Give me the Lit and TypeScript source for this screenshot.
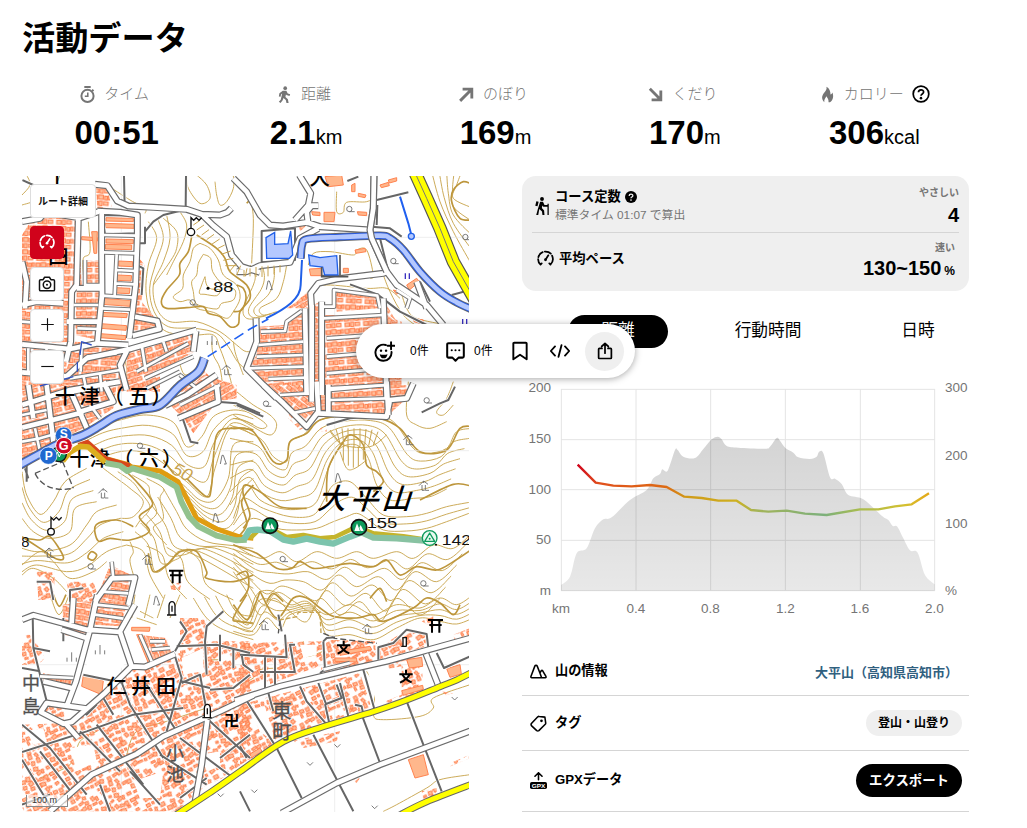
import { html, svg, css, LitElement } from 'lit';
import { customElement, property } from 'lit/decorators.js';

const icons: Record<string, any> = {
  time: svg`<g fill="none" stroke="currentColor"><path stroke-width="2.600" d="M7.500 1.400h9M18.500 5.200l2 2"/><circle cx="12" cy="14" r="8.600" stroke-width="2.800"/><path stroke-width="2.200" d="M12.400 9v5.500H8.200"/></g>`,
  walk: svg`<g fill="currentColor"><circle cx="13" cy="3" r="2.6"/><path d="M9.600 6.600h5l2 4 3.400 1.200-.9 2.400-4.400-1.600-.6-1-.8 4 3.500 3.200 1 5.200h-3l-1-4.200-3.200-2.800-1.400 3.600L6.400 24 4 22.300l2.700-3 2-8.600-1.600 1.200-.6 3.400-2.500-.4.800-4.600z"/></g>`,
  up: svg`<path fill="none" stroke="currentColor" stroke-width="4" d="M3 21L19 5M6.500 4.500H19.500V17.500"/>`,
  down: svg`<path fill="none" stroke="currentColor" stroke-width="4" d="M4 4L19 19M19.500 6.500V19.500H6.500"/>`,
  fire: svg`<path fill="currentColor" d="M10.500 1c1 3.500-1 5.500-3.500 9-3 4.200-4 8 .5 13-.4-3.500.8-5.400 3.300-8.500 1 3 3 4 2.700 8.500h2c4.500-3 5.500-8.500 3.500-14-.8 1.800-1.600 2.600-2.800 3C16.500 7.500 14.500 3 10.500 1z"/>`,
  help: svg`<g fill="none" stroke="currentColor" stroke-width="2.300"><circle cx="12" cy="12" r="10.400"/><path d="M8.600 9.800c0-4.300 6.900-4.400 6.900-.4 0 2.500-3.500 2.500-3.500 4.900"/></g><circle cx="12" cy="17.500" r="1.700" fill="currentColor"/>`,
  helpSolid: svg`<circle cx="12" cy="12" r="12" fill="currentColor"/><path fill="none" stroke="#efefef" stroke-width="2.600" d="M8.300 9.800c0-4.500 7.400-4.500 7.400-.3 0 2.700-3.700 2.500-3.700 5"/><circle cx="12" cy="18" r="1.700" fill="#efefef"/>`,
  hiker: svg`<g fill="currentColor"><circle cx="12" cy="2.600" r="2.600"/><path d="M4.500 5.500l3 .8-1.500 6-3-.8zM9.500 6.200h3.800l2 4.300h4V9h1.700v15h-1.700V13h-5.500l-1.300-1.800-.7 3.600 3 3.200.5 6h-2.700l-.6-4.600-3.600-3.400L7 24H4.300l2-7.500z"/></g>`,
  pace: svg`<g fill="none" stroke="currentColor" stroke-width="2.500" stroke-linecap="round"><path d="M5 20.500Q1.600 17.500 1.600 13M2 10Q3.500 4.500 8 2.900M11 2.200Q16.500 1.800 19.500 5.200M21.300 8Q24.500 15.500 19 20.500M5 20.500l1.600-1.500M19 20.500l-1.600-1.500M12.500 13l3.500-5.500"/></g><circle cx="12" cy="13.800" r="2" fill="currentColor"/>`,
  camera: svg`<g fill="none" stroke="currentColor" stroke-width="2" stroke-linejoin="round"><path d="M3.500 6.200h3.300L8.800 3h6.400l2 3.200h3.300q1.500 0 1.500 1.500v11.800q0 1.500-1.500 1.500h-17Q2 21 2 19.500V7.700q0-1.500 1.500-1.500z"/><circle cx="12" cy="13" r="5"/></g><circle cx="12" cy="13" r="1.300" fill="currentColor"/>`,
  plus: svg`<path stroke="currentColor" stroke-width="1.800" d="M2 12h20M12 2v20"/>`,
  minus: svg`<path stroke="currentColor" stroke-width="1.800" d="M2 12h20"/>`,
  smile: svg`<g fill="none" stroke="currentColor" stroke-width="2.200" stroke-linecap="round"><path d="M13.500 4.600A9.200 9.200 0 1 0 20 12.500M19.500 1.500v8M15.500 5.500h8"/></g><circle cx="8" cy="11" r="1.400" fill="currentColor"/><circle cx="13.800" cy="11" r="1.400" fill="currentColor"/><path fill="currentColor" d="M6.500 15q4.500 1.500 9 0-1 4.800-4.500 4.800T6.500 15z"/>`,
  comment: svg`<path fill="none" stroke="currentColor" stroke-width="2.300" stroke-linejoin="round" d="M4 2.500h16q1.500 0 1.500 1.500v13.500q0 1.500-1.500 1.500h-4.500L12 22.500 8.500 19H4q-1.500 0-1.500-1.500V4q0-1.500 1.500-1.500z"/><g fill="currentColor"><circle cx="7.700" cy="10.500" r="1.200"/><circle cx="12" cy="10.500" r="1.200"/><circle cx="16.300" cy="10.500" r="1.200"/></g>`,
  bookmark: svg`<path fill="none" stroke="currentColor" stroke-width="2.300" stroke-linejoin="round" d="M5 2h14q1 0 1 1v19l-8-5.500L4 22V3q0-1 1-1z"/>`,
  code: svg`<path fill="none" stroke="currentColor" stroke-width="2.200" stroke-linecap="round" stroke-linejoin="round" d="M6 6.500l-5 5.500 5 5.500M18 6.500l5 5.500-5 5.500M13.800 5l-3.600 14"/>`,
  share: svg`<path fill="none" stroke="currentColor" stroke-width="2.300" stroke-linecap="round" stroke-linejoin="round" d="M8 8.500H4.500q-1 0-1 1V21q0 1 1 1h15q1 0 1-1V9.500q0-1-1-1H16M12 15V2M7.500 6L12 1.800 16.500 6"/>`,
  mountain: svg`<path fill="none" stroke="currentColor" stroke-width="2.200" stroke-linejoin="round" d="M8.500 3.200q-1.200 0-1.700 1.200L1.300 19q-.4 1.700 1.200 1.700h19q1.700-.2 1-1.700l-4.600-8q-1-1.400-2 0L14 14 10.200 4.400q-.5-1.200-1.700-1.200zM14 14l2.400 6.700"/>`,
  tag: svg`<path fill="none" stroke="currentColor" stroke-width="2.200" stroke-linejoin="round" d="M13 2l8 1 1.200 8.500q0 1-1 2L12.500 22q-1.500 1-3 0L2 15q-1-1.500 0-3l9-9.500q1-.7 2-.5z"/><circle cx="16.200" cy="8.200" r="1.900" fill="currentColor"/>`,
  gpx: svg`<path fill="none" stroke="currentColor" stroke-width="2.200" stroke-linecap="round" stroke-linejoin="round" d="M12 11V1.500M7 6l5-5 5 5"/><rect x="0" y="14" width="24" height="10" rx="2.500" fill="currentColor"/><text x="12" y="22" font-size="8.500" font-weight="700" text-anchor="middle" textLength="19" lengthAdjust="spacingAndGlyphs" fill="#fff" font-family="Liberation Sans, sans-serif">GPX</text>`,
};

const icon = (name: string, size: number, cls = '') => html`
  <svg class="icon ${cls}" width=${size} height=${size} viewBox="0 0 24 24">${icons[name]}</svg>
`;

type Pt = number[];
const parse = (s: string): Pt[] => s.trim().split(/\s+/).map(p => p.split(',').map(Number));
const r1 = (n: number) => Math.round(n * 10) / 10;

// smooth curve through all points
const curve = (p: Pt[]) => {
  let d = `M${p[0]}`;
  for (let i = 0; i < p.length - 1; i++) {
    const a = p[i - 1] || p[i];
    const b = p[i];
    const c = p[i + 1];
    const e = p[i + 2] || c;
    d += `C${r1(b[0] + (c[0] - a[0]) / 6)},${r1(b[1] + (c[1] - a[1]) / 6)} ${r1(c[0] - (e[0] - b[0]) / 6)},${r1(c[1] - (e[1] - b[1]) / 6)} ${c}`;
  }
  return d;
};
const line = (s: string) => 'M' + s.trim().replace(/ /g, 'L');

// map sheets, 3 units per pixel
interface Sheet {
  x: number;
  y: number;
  // pairs of boundary contours and how many steps lie between them
  bands?: [string, string, number][];
  bold?: string[];
  thin?: string[];
  estate?: [string, number][];
  village?: string[];
  blocks?: string[];
  blank?: string[];
  wide?: string[];
  narrow?: string[];
  gray?: string[];
}

const sheets: Sheet[] = [
  {
    x: 0, y: 0,
    bands: [
      ['385,140 410,190 385,270 378,350 395,420 440,470 520,480 580,480 600,520 625,590 640,650', '440,120 450,190 430,260 400,330 410,400 450,440 530,440 600,470 650,510 680,530 720,520', 2],
      ['500,0 505,40 540,85 570,70 560,30 530,0', '640,0 640,40 620,80 600,90 590,60 585,20 600,0', 1],
      ['575,500 580,540 600,580 610,650', '640,500 645,530 655,560 670,600 700,610', 1],
    ],
    bold: [
      '515,185 505,230 480,265 478,300 440,345 424,380 440,400 500,398 550,395 565,415 600,425 630,455 655,448 660,410 690,370 680,330 630,290 615,250 590,220 530,180',
    ],
    thin: [
      '555,305 560,330 575,342 600,345 590,362 555,358 538,355 545,330 555,305',
      '550,238 572,250 578,290 610,330 645,345 640,375 605,385 590,402 540,392 525,380 520,350 515,320 530,300 535,265 550,238',
      '540,205 520,220 510,260 490,300 488,340 460,365 480,380 510,375 530,400 580,412 620,430 640,410 660,370 650,330 610,300 595,255 570,220 540,205',
      '205,140 210,230 190,250 190,300', '6,90 50,75 100,40 120,0', '260,30 330,75 375,100 375,115',
      '480,110 500,150 490,200 460,260 440,300', '430,130 470,170 470,220 450,260 400,330',
      '6,60 30,30 20,0', '480,570 500,600 560,560', '300,525 320,580 310,640',
    ],
    estate: [
      ['50,110 165,125 165,320 150,500 6,510 6,180', 2],
      ['228,35 262,40 275,95 232,100', 5],
      ['195,255 240,255 235,495 165,480 170,340 195,330', 0],
      ['353,245 375,270 365,380 415,440 415,470 340,490', 4],
      ['6,520 160,530 150,640 6,640', 8], ['165,500 315,510 310,650 120,650', 4],
      ['320,530 520,475 522,530 420,590 420,650 320,650', -18],
      ['450,650 545,580 570,605 540,650', -40],
      ['175,130 185,330 170,330 165,130', 0],
    ],
    blocks: [
      '258,128 340,130 340,140 258,138', '256,145 342,148 342,160 256,158', '258,192 340,194 340,206 258,204',
      '256,208 335,210 335,224 256,222', '296,258 338,260 338,275 296,273', '292,300 335,302 333,318 292,316',
      '288,338 330,340 328,356 288,354', '246,370 332,376 330,394 246,388', '244,412 322,416 320,428 244,424',
      '243,446 320,452 318,466 243,460', '241,476 318,482 316,494 241,488', '185,185 232,188 232,198 185,194',
      '215,170 232,170 230,235 222,235',
    ],
    wide: [
      '225,28 262,32 292,78 325,93 400,97 500,103 545,118 580,152 620,185 635,240 665,275 720,292',
      '545,118 600,120 622,112 634,100', '232,108 300,112 352,120 352,180 347,330 328,490',
      '245,112 245,230 246,360 232,505', '50,108 175,128 170,330 155,350 152,500 138,560', '6,140 60,130 80,105',
      '6,508 150,522 232,505 325,510', '345,425 412,438 418,462 338,482', '170,340 240,340',
      '6,592 140,604 200,550 330,522 530,465', '322,525 300,570 320,645', '528,468 520,530', '6,260 20,320 15,400',
      '140,440 235,440', '6,390 50,380 130,385', '175,130 235,110',
    ],
    narrow: [
      '250,180 350,182', '250,232 350,235', '290,238 284,362', '290,285 345,288', '288,325 345,328', '245,362 340,368',
      '243,400 330,404', '172,460 235,462', '195,255 195,330 240,330', '160,390 235,390', '365,510 378,590',
      '350,590 505,505', '375,610 520,545', '430,500 440,530', '185,505 182,590', '200,545 290,535', '150,610 300,585',
      '240,595 245,650', '190,600 200,650', '380,640 480,590', '480,600 530,640', '80,520 70,600', '25,520 25,600', '6,440 130,450',
    ],
    gray: [
      '375,170 400,140 430,120 490,105', '375,155 375,205 352,205', '312,3 314,95', '498,0 497,95', '250,362 335,370 340,380',
      '350,270 370,280 365,360', '6,15 40,30 40,70', '245,120 350,122 350,175 255,178z',
    ],
  },
  {
    x: 660, y: 0,
    bands: [
      ['575,-10 600,80 640,170 690,260', '665,-10 650,30 640,70 700,100', 4],
      ['30,270 45,300 40,330 10,400 20,430 60,430', '140,270 130,320 110,370 60,400 70,420 110,410', 3],
      ['480,340 500,400 530,430 620,450', '430,300 450,350 490,420 540,460', 1],
    ],
    bold: ['700,30 670,20 640,45 635,80 660,130 700,135', '-10,330 10,340 18,370 5,405 -20,410', '10,50 30,70 20,85'],
    thin: ['30,70 40,130 35,265', '290,50 290,110 310,112 320,82 380,80 400,60 400,0', '205,270 220,235 270,230 340,240 350,225 380,225 400,300 390,310', '175,390 210,345 260,330 380,340 440,340 480,370', '195,500 300,495 350,490'],
    estate: [
      ['55,455 135,450 190,410 200,400 240,380 240,420 430,420 485,440 485,650 110,650 20,580 50,540', -4],
      ['282,345 412,360 415,400 290,410', 3], ['425,365 470,440 430,440', 40],
      ['165,150 200,150 180,170', -20], ['140,400 170,380 190,360 210,345 210,400', -30],
    ],
    blocks: ['208,282 245,280 245,302 212,302', '252,112 285,112 282,140 252,140', '255,5 305,0 310,30 265,35', '310,280 325,280 325,293 310,293', '345,225 375,220 378,230 348,235', '500,330 530,310 538,320 508,345', '420,30 445,22 448,32 424,38', '355,55 378,60 375,68 355,64', '460,345 478,350 470,358', '335,30 345,25 345,50 335,50', '445,15 470,8 470,18 448,24', '215,110 240,112 240,122 218,120', '352,110 380,112 380,122 355,120', '520,430 550,435 550,448 522,440'],
    wide: [
      '-20,10 20,50 60,120 90,150 130,153 200,142 240,155 390,165', '178,0 212,55 205,90 165,135', '205,150 200,110 215,92 235,92',
      '402,0 400,100 390,165 395,190 440,290 470,330 560,390 610,450', '-10,290 20,290 60,272 150,262 180,190 235,160',
      '215,400 212,355 235,325 290,312 430,295 442,290', '530,320 560,400', '48,430 50,500 20,580 110,670', '215,390 215,680',
      '245,380 245,660', '430,370 440,670', '195,400 200,660',
    ],
    narrow: [
      '250,430 430,420', '260,490 430,478', '55,510 190,500', '25,580 195,575', '50,545 190,540', '260,545 440,530', '260,595 440,580',
      '85,612 200,608', '260,640 440,630', '62,470 135,468 140,440 185,408', '245,395 282,395 282,345 412,362 420,400',
      '470,345 510,370 500,400',
    ],
    gray: [
      '65,168 165,160 165,255 65,262z', '395,155 450,160 485,185', '410,75 505,52', '322,18 355,5', '412,90 410,150', '690,345 635,360', '470,210 500,235',
      '540,320 570,380', '330,328 412,358 480,410 560,450', '245,302 340,303', '420,190 445,290',
    ],
  },
  {
    x: 0, y: 630,
    bands: [
      ['150,168 230,125 300,105 380,90 460,112 500,185 545,155 580,95 640,75 700,85', '250,215 300,200 350,198 400,215 450,250 500,290 560,335 585,250 630,130 700,150', 4],
      ['440,262 490,300 540,345 585,345 625,280 640,180 700,170', '480,320 520,370 570,415 620,430 650,390 665,320 700,280', 4],
      ['430,310 470,380 500,432 560,470 640,482 700,490', '345,440 385,480 405,560 450,535 500,500 700,610', 5],
      ['250,250 290,280 330,310 370,350 340,395 300,400', '380,280 430,310 420,340 430,400 400,430 440,480', 3],
      ['6,260 20,330 60,388 100,350 135,290 200,250', '6,400 40,440 90,460 150,440 165,370 230,350', 3],
      ['6,490 60,500 150,480 200,420 230,380 290,360', '6,560 50,540 140,560 200,545 260,500 320,480', 3],
      ['320,480 370,500 390,570 430,640', '500,490 540,530 560,600 640,645', 3],
    ],
    bold: [
      '300,245 345,285 398,355 358,395 388,438 330,465 270,460 235,468 228,420 290,405 340,425', '6,458 60,465 90,455 130,515 110,522 60,490 6,455',
      '385,505 400,560 440,540 480,500 530,500 560,560 560,580 640,590 700,570', '205,510 215,500 230,510 220,525 205,520 205,510',
      '500,280 560,335 575,300 590,150 650,130 700,135', '640,470 680,420 665,350 700,300', '430,225 460,265',
    ],
    thin: ['6,540 60,500 100,530 150,580 220,560 260,530', '6,570 40,550 100,580 140,620', '330,470 340,500 330,530 350,600'],
    estate: [['6,0 290,0 280,70 190,130 6,220', -14], ['450,60 550,-30 650,0 650,40 590,50 520,145 490,100', -30], ['270,540 345,575 325,650 225,650', 12]],
    village: ['50,560 105,560 100,645 55,645', '140,590 220,590 240,650 150,650', '450,600 485,590 480,615 455,615'],
    wide: [
      '6,60 150,15 300,-10', '6,128 190,82', '80,0 100,170', '150,15 170,60 205,140', '435,62 500,30 590,-30', '475,100 595,50 590,0',
      '25,0 40,100', '225,650 275,580 345,578 325,660', '180,80 280,50 250,-10',
    ],
    narrow: ['6,170 60,160 130,140', '45,130 60,200', '6,90 80,75', '210,60 240,100', '480,60 600,0', '275,530 280,580', '245,620 325,625', '110,30 230,10'],
    gray: ['488,100 505,150 512,170 535,175', '15,250 25,280', '50,590 90,590 100,645', '150,650 150,615 190,610', '590,50 650,55 720,85', '20,235 20,290'],
  },
  {
    x: 660, y: 630,
    bands: [
      ['-30,120 60,160 100,215 140,230 150,170 190,150 240,105 320,92 400,92 460,110 520,190 560,205 620,190 650,140 700,130', '-30,360 20,300 60,345 120,370 180,372 230,350 265,250 300,190 350,180 385,220 410,300 450,345 520,340 570,335 620,312 700,305', 6],
      ['-20,400 10,340 70,370 150,395 220,390 255,340 280,300 330,290 380,340 430,390 500,395 560,385 620,365 700,350', '-20,440 40,400 110,430 170,435 230,430 280,410 320,395 350,385 380,400 430,435 500,438 560,430 620,410 700,380', 2],
      ['-20,478 60,520 120,500 170,530 230,500 290,520 350,500 400,520 470,500 520,520 580,480 640,490 700,440', '-20,560 20,620 60,690 100,640 150,680 200,710 240,640 300,690 360,650 420,710 470,640 540,690 600,640 640,670 700,620', 6],
      ['505,-10 500,90 530,120 570,130 620,110', '640,-10 620,40 590,80 610,90 640,60', 1],
      ['-10,20 40,60 90,90 110,120 90,150 30,120 -20,90', '-20,60 30,85 70,110 80,125 60,130 20,110 -20,100', 1],
    ],
    bold: [
      '-20,130 40,140 100,230 140,225 150,170 200,145 240,105 330,92 420,100 480,130 540,200 620,195 660,130 700,125',
      '260,350 265,250 310,170 335,150 370,180 380,240 410,260 430,290 400,320', '-20,480 50,505 110,550 155,550 180,530 220,550 270,545 330,535 400,545 440,525 480,570 530,545 590,555 640,530 700,490',
      '10,430 30,390 10,330 15,300 60,320 120,365 200,370', '540,345 640,298 700,305', '-10,570 20,560 25,610 0,650', '80,650 100,625 130,650', '390,640 420,610 440,650',
    ],
    thin: ['270,140 310,180 390,185 440,150', '300,200 320,250 345,250 380,225'],
    estate: [['90,0 225,0 230,80 200,125 130,60', 38], ['240,0 520,0 500,40 440,95 240,85', -3]],
    village: ['0,35 12,35 12,45 0,45', '240,130 260,125 260,140 245,140', '145,80 190,130 180,135 145,100'],
    wide: ['70,0 130,55 200,125 235,80 230,-10', '235,85 440,95 450,45 500,40 520,-5', '265,0 265,80', '440,-10 445,90'],
    narrow: ['270,45 440,40', '270,15 440,0', '155,85 225,70', '120,30 205,25'],
    gray: ['-10,60 70,95', '240,85 400,92', '260,120 330,100 430,92', '545,82 600,55 625,45 645,5'],
  },
  {
    x: 0, y: 1269,
    bands: [
      ['520,0 560,60 610,95 700,125', '620,-10 640,30 665,50 700,55', 3],
      ['345,-10 335,60', '480,-10 450,60', 3], ['350,60 410,80', '360,40 400,60', 1],
    ],
    bold: ['100,-10 118,25 138,-10', '680,-10 640,60 655,70 700,75'],
    thin: ['90,-10 117,50 148,-10', '60,540 150,500 180,430 230,400', '320,470 350,400 440,370 560,330', '470,215 520,190 600,185'],
    estate: [['228,10 325,10 300,85 225,80', 8], ['128,20 215,10 195,120 130,110', 10], ['355,110 440,120 455,165 385,195', 70], ['70,225 155,245 150,270 70,250', 8]],
    blocks: ['335,88 390,88 388,100 335,98', '190,232 250,248 245,290 185,265', '350,110 365,110 395,190 385,195'],
    village: ['6,110 35,110 75,180 55,200 6,200', '480,60 560,60 560,130 690,130 690,480 470,640 6,640 6,380 140,375 270,280 330,210 480,165', '80,310 140,330 130,370 70,345'],
    blank: ['150,450 220,440 230,490 170,520', '340,550 430,520 420,600 360,600', '540,470 600,460 600,500 560,520', '200,110 300,120 320,190 260,270 200,225', '485,180 550,150 550,220 490,230', '20,400 70,390 80,430 40,440', '560,560 690,510 690,640 470,640'],
    wide: [
      '6,65 40,52 200,95 300,102 335,205 375,207 465,168', '232,-10 210,95 168,250 140,325', '335,205 255,285 155,372 130,377 62,342 80,315 200,332',
      '700,292 600,340 430,415 350,468 215,530 90,640', '562,365 545,500 525,612', '135,375 175,420', '70,250 155,270', '345,20 300,100', '160,0 155,75', '125,95 200,120',
    ],
    narrow: ['225,50 310,62', '228,20 325,30', '360,110 395,190', '390,130 435,130', '395,155 450,150', '60,235 160,240'],
    gray: [
      '6,462 200,400 340,350 490,330', '6,380 90,450 200,590', '38,50 40,150 80,310', '60,460 160,590', '300,240 330,320 430,480', '380,260 470,400', '462,165 485,240 460,330 440,400',
      '230,380 370,560', '180,400 300,520', '420,470 560,560', '480,420 640,540', '570,370 690,480', '485,255 540,230 560,340', '470,145 590,140 690,165', '600,110 600,190', '560,230 555,130 560,85 610,40',
      '480,70 500,100 465,160', '570,275 640,270 690,230', '6,485 100,640', '240,560 270,640', '330,520 420,620', '130,60 130,130', '40,150 90,160', '6,210 60,220', '190,230 310,255', '485,250 570,270',
      '640,150 640,210', '600,480 690,410', '150,320 200,350 230,320', '6,620 90,590', '480,600 560,540', '250,300 280,350',
    ],
  },
  {
    x: 660, y: 1269,
    bands: [
      ['-20,30 20,70 50,-10 100,-20 150,20 200,10 260,50 330,20 400,50 470,20 540,30 600,0 650,20 700,-10', '-20,100 40,110 80,60 120,95 150,50 230,40 260,110 330,110 400,125 470,90 540,60 600,70 650,78 700,60', 4],
    ],
    bold: ['-20,20 20,65 45,20 60,-20', '60,-20 110,60 160,0 200,0 240,30 280,55 350,60 400,50 430,70 520,30 560,0 600,15 640,50 660,20'],
    thin: ['0,260 40,240 60,215 130,210', '380,220 405,270 400,350 430,365 540,355 580,330 580,300 690,260', '430,640 470,620 560,570 600,545 690,530', '190,130 195,175 250,160'],
    village: [
      '0,135 250,130 250,200 0,290', '260,125 405,130 410,195 240,230', '0,320 360,225 395,330 230,380 130,420 90,450 0,500', '440,180 545,180 550,290 440,320',
      '415,150 500,95 560,110 560,145 420,185', '640,110 690,90 690,125 645,130', '545,70 580,55 580,90', '150,430 300,400 290,430 190,450', '545,580 590,570 590,600 550,605', '330,540 360,540 350,555', '600,280 640,285 610,295', '620,500 690,470 690,480 620,510',
    ],
    blank: ['385,225 485,205 485,290 410,320', '55,250 90,250 90,270 60,270', '30,340 75,325 110,440 60,400', '180,140 230,140 230,170 190,180'],
    blocks: ['505,485 550,470 565,530 525,540', '500,185 545,178 548,205 508,210', '620,212 660,200 664,228 630,238', '30,468 60,450 66,460 34,480', '300,160 390,145 395,155 300,172', '285,180 350,180 350,192 285,190', '485,278 548,262 550,274 490,292'],
    wide: ['-15,308 120,265 350,210 440,190 700,118', '558,168 595,262', '125,645 290,555 420,500 720,388'],
    narrow: ['250,215 330,195'],
    gray: [
      '110,450 185,600', '220,410 340,640', '365,350 420,495', '500,310 550,440 605,580', '590,165 612,210 690,175', '370,215 405,340', '0,170 140,178 135,110', '75,175 75,270', '105,178 105,260', '165,225 150,140 165,140',
      '60,222 165,222', '250,130 255,215 240,225', '180,265 200,310 265,385', '235,255 258,318 305,300 290,260', '20,308 110,450', '300,255 325,355', '415,185 415,148 460,135 500,95 560,108 565,150', '85,285 100,340', '0,445 20,480',
      '0,580 30,640', '250,130 260,120 285,118', '5,170 10,200 40,222', '255,318 270,385', '345,320 365,325 370,350', '115,50 125,100',
    ],
  },
];

const band = ([a, b, n]: [string, string, number]) => {
  const pa = parse(a);
  const pb = parse(b);
  const len = Math.min(pa.length, pb.length);
  return Array.from({ length: n + 1 }, (_, i) => {
    const t = i / n;
    return curve(pa.slice(0, len).map((p, k) => [r1(p[0] + (pb[k][0] - p[0]) * t), r1(p[1] + (pb[k][1] - p[1]) * t)]));
  });
};

// scattered village houses for the repeating fill
let seed = 11;
const rand = () => (seed = (seed * 16807) % 2147483647) / 2147483647;
const houses = Array.from({ length: 100 }, (_, i) => ({
  x: (i % 10) * 18 + rand() * 6,
  y: Math.floor(i / 10) * 18 + rand() * 6,
  w: 6 + rand() * 9,
  h: 5 + rand() * 8,
  r: rand() * 40 - 20,
  on: rand() > 0.17,
}));

const angles = [...new Set(sheets.flatMap(s => (s.estate || []).map(e => e[1])))];

const river = '553,550 535,590 480,632 420,690 360,703 290,722 240,752 190,780 110,810 -10,875';
const canal = '842,250 846,210 862,192 960,186 1080,182 1110,190 1150,225 1200,290 1260,350 1310,382 1360,405';

// [colour, width, points]
const route: [string, number, string][] = [
  ['#e09c10', 15, '255,850 322,868 335,876 420,888 474,920 496,962 530,1030 590,1062 660,1086 700,1090'],
  ['#d8481c', 13, '175,810 202,801 224,820 256,850 330,872'],
  ['#dcae1e', 17, '128,858 148,833 180,814 205,816 256,862'],
  ['#c4b42c', 14, '690,1090 715,1065 750,1060 800,1086 850,1080 900,1090 945,1086 1010,1055 1060,1075 1150,1084 1230,1096'],
  ['#92c28e', 18, '256,864 300,872 322,888 338,880 420,906 470,936 484,980 508,1026 535,1054 590,1082 650,1096 680,1094'],
  ['#7cc4ad', 19, '672,1094 688,1066 712,1064 750,1068 790,1094 820,1100 860,1091 900,1100 940,1106 990,1085 1025,1072'],
  ['#88c2a2', 19, '1025,1072 1060,1088 1130,1090 1230,1098'],
];

const trees: [number, number][] = [[620, 585], [250, 955], [88, 1133], [382, 1154], [1165, 795], [1212, 932], [1042, 1362], [732, 1350]];
const conifers: [number, number][] = [[748, 332], [610, 855], [588, 1030], [955, 910], [410, 1278]];
const circles: [number, number][] = [[518, 382], [988, 102], [1120, 258], [1336, 186], [360, 812], [738, 686], [1220, 676], [788, 1152], [1210, 1225], [212, 1174]];
const grass: [number, number][] = [[155, 1450], [240, 1428], [576, 500]];
const ticks: [number, number][] = [[952, 1712], [870, 1766], [703, 1848], [1064, 1896], [1304, 1570], [602, 1860]];
const schools: [number, number][] = [[971, 1417], [1158, 1504]];

@customElement('trail-map')
export class TrailMap extends LitElement {
  static styles = css`
    :host {
      display: block;
      position: relative;
      height: 636px;
      border-radius: 6px;
      overflow: hidden;
      background: #fff;
    }
    .map {
      display: block;
      width: 100%;
      height: 100%;
    }
    .label {
      font-family: 'Noto Sans CJK JP', sans-serif;
      font-weight: 500;
      fill: #000;
    }
    .area {
      font-family: 'Noto Sans CJK JP', sans-serif;
      fill: #505050;
      stroke: #505050;
      stroke-width: 1px;
    }
    .mark {
      font-family: 'Noto Sans CJK JP', sans-serif;
      font-weight: 700;
    }
    .number {
      font-family: 'Liberation Sans', sans-serif;
      fill: #111;
    }
    .number.height {
      fill: #c8a450;
      font-style: italic;
    }
    .badge {
      font-family: 'Liberation Sans', sans-serif;
      font-weight: 700;
      fill: #fff;
      text-anchor: middle;
    }
    .controls {
      position: absolute;
      left: 8px;
      top: 8px;
      display: flex;
      flex-direction: column;
      align-items: flex-start;
      gap: 8px;
    }
    .button {
      width: 34px;
      height: 33.500px;
      display: flex;
      align-items: center;
      justify-content: center;
      box-sizing: border-box;
      background: #fff;
      color: #111;
      border: 1px solid #ddd;
      border-radius: 4px;
    }
    .button.wide {
      width: 66px;
      padding-bottom: 1px;
      font: 700 10px 'Noto Sans CJK JP', sans-serif;
    }
    .button.active {
      background: #d0021b;
      border-color: #d0021b;
      color: #fff;
    }
    .button.zoom {
      padding-bottom: 2px;
    }
    .scale {
      position: absolute;
      left: 4px;
      bottom: 5px;
      width: 42px;
      height: 12px;
      box-sizing: border-box;
      padding-left: 5px;
      border: 1px solid #888;
      border-top: 0;
      background: rgba(255, 255, 255, 0.6);
      color: #333;
      font: 9px/10px 'Liberation Sans', sans-serif;
    }
  `;

  layer(pick: (s: Sheet) => any) {
    return sheets.map(s => svg`<g transform="translate(${s.x} ${s.y})">${pick(s)}</g>`);
  }

  strokes(lines: string[] | undefined, color: string, width: number) {
    return svg`<path d=${(lines || []).map(line).join('')} fill="none" stroke=${color} stroke-width=${width} stroke-linejoin="round" />`;
  }

  terrain() {
    return this.layer(s => svg`
      <path d=${(s.bands || []).flatMap(band).join('')} fill="none" stroke="#c8a54e" stroke-width="2.800" />
      <path d=${(s.thin || []).map(t => curve(parse(t))).join('')} fill="none" stroke="#c8a54e" stroke-width="2.800" />
      <path d=${(s.bold || []).map(t => curve(parse(t))).join('')} fill="none" stroke="#bd963c" stroke-width="5" />
    `);
  }

  buildings() {
    return this.layer(s => svg`
      ${(s.estate || []).map(([p, a]) => svg`<polygon points=${p} fill="#fff" /><polygon points=${p} fill="url(#estate${a})" />`)}
      ${(s.village || []).map(p => svg`<polygon points=${p} fill="url(#village)" />`)}
      ${(s.blank || []).map(p => svg`<polygon points=${p} fill="#fff" />`)}
      ${(s.blocks || []).map(p => svg`<polygon points=${p} fill="#ffb78c" stroke="#ff8350" stroke-width="3" />`)}
    `);
  }

  roads() {
    return svg`
      ${this.layer(s => this.strokes(s.gray, '#fff', 11))}
      ${this.layer(s => this.strokes(s.gray, '#666', 6))}
      ${this.layer(s => svg`${this.strokes(s.wide, '#6c6c6c', 21)}${this.strokes(s.narrow, '#777', 14)}`)}
      ${this.layer(s => svg`${this.strokes(s.wide, '#fff', 14)}${this.strokes(s.narrow, '#fff', 8)}`)}
    `;
  }

  highways() {
    const main = line('1186,-5 1220,70 1260,160 1300,260 1365,375');
    const south = [
      '460,1925 580,1846 660,1790 790,1700 910,1655 1060,1610 1160,1575 1260,1535 1310,1515 1370,1485',
      '1130,1925 1220,1880 1370,1822',
    ].map(l => curve(parse(l))).join('');
    return svg`
      <path d=${main} fill="none" stroke="#555" stroke-width="40" />
      <path d=${main} fill="none" stroke="#ff0" stroke-width="33" />
      <path d=${main} fill="none" stroke="#777" stroke-width="3" />
      <path d=${south} fill="none" stroke="#666" stroke-width="21" />
      <path d=${south} fill="none" stroke="#ff0" stroke-width="15" />
    `;
  }

  water() {
    return svg`
      <g fill="none" stroke-linejoin="round">
        <path d=${curve(parse(river))} stroke="#666" stroke-width="29" />
        <path d=${curve(parse(river))} stroke="#3a66d8" stroke-width="23" />
        <path d=${curve(parse(river))} stroke="#b4c8ff" stroke-width="17" />
        <path d=${curve(parse(canal))} stroke="#666" stroke-width="25" />
        <path d=${curve(parse(canal))} stroke="#2a5ce0" stroke-width="20" />
        <path d=${curve(parse(canal))} stroke="#b4c8ff" stroke-width="14" />
        <path d="M563,545L690,462L745,432" stroke="#2060f0" stroke-width="5" stroke-dasharray="32 16" />
        <path d="M738,430C800,400 842,370 842,330L846,255" stroke="#2060e8" stroke-width="6" />
        <path d="M1140,65L1165,145L1174,180" stroke="#2060f0" stroke-width="6" />
        <path d="M184,500L215,510M185,500L180,540M172,560V590M60,633L160,605" stroke="#3050c0" stroke-width="4" />
      </g>
      <g fill="#b4c8ff" stroke="#2060e8" stroke-width="4">
        <path d="M738,188L764,172V208L804,206L812,168L818,240L808,250H740z" />
        <path d="M866,240L900,248 950,242 954,300 914,300 908,276 870,272z" />
        <circle cx="1174" cy="184" r="9" />
      </g>
      <path d="M905,276V305H985M960,240V300" stroke="#555" stroke-width="5" fill="none" />
      <path d="M1156,295V312M1168,295V312M1328,432V450M1340,432V450" stroke="#3a30c0" stroke-width="4" />
    `;
  }

  symbols() {
    return svg`
      <g fill="none" stroke="#666" stroke-width="2.600">
        ${trees.map(([x, y]) => svg`<path d="M${x - 15},${y}l14,-14l13,10M${x - 1},${y - 14}v6M${x - 6},${y - 2}v16h8M${x + 4},${y - 2}v16h11" />`)}
        ${conifers.map(([x, y]) => svg`<path d="M${x - 9},${y + 12}l5,-26l4,0l9,26h-7" />`)}
        ${circles.map(([x, y]) => svg`<circle cx=${x} cy=${y} r="8" /><path d="M${x},${y + 8}h16" />`)}
        ${grass.map(([x, y]) => svg`<path d="M${x - 14},${y + 10}v-12M${x},${y + 10}v-28M${x + 14},${y + 10}v-12" />`)}
        ${ticks.map(([x, y]) => svg`<path d="M${x - 9},${y - 4}l9,9l9,-9" />`)}
      </g>
      <!-- cuttings and slopes -->
      <path d="M520,150l20,-14M530,165l22,-15M545,180l22,-16M560,194l22,-16M575,208l24,-16M590,222l24,-12M604,238l28,-10M610,256l30,-6M616,272l34,0M628,290l20,-24M650,300l12,-28M676,304l5,-24M672,285v20M690,280v24M708,276v30M726,274v32M744,272v32M762,272v26M780,270v22M930,765l30,40M948,762l14,50M966,760l6,55M984,760v60M1002,760v56M1020,760v54M1038,762l-4,50M1056,764l-10,48M1074,770l-14,40M970,812v45M985,814v58M1000,814v64M1015,814v60M1030,814v40" stroke="#c8a450" stroke-width="3" />
      <g fill="none" stroke="#111" stroke-width="4">
        <circle cx="513" cy="171" r="11" fill="#fff" /><path d="M513,160V128l8,8 8,-8 8,8 8,-8" />
        <circle cx="93" cy="1070" r="10" fill="#fff" /><path d="M93,1060V1027l8,8 8,-8 8,8 8,-8" />
      </g>
      <g fill="none" stroke="#000" stroke-width="6">
        <path d="M447,1187H490M450,1201H487M458,1187V1225M479,1187V1225" />
        <path d="M1224,1335H1269M1228,1350H1265M1236,1335V1373M1258,1335V1373" />
        ${schools.map(([x, y]) => svg`<path d="M${x - 20},${y - 6}h40M${x},${y - 20}v14M${x + 11},${y - 6}q-6,14 -29,25M${x - 11},${y - 6}q8,16 28,24" />`)}
      </g>
      <g fill="#fff" stroke="#111" stroke-width="4">
        <path d="M447,1320V1292q1,-12 9,-12t9,12V1320zM441,1320h28M456,1292v18" /><path d="M553,1628V1600q1,-12 9,-12t9,12V1628zM547,1628h28M562,1600v18" /><path d="M1149,1414V1388h10v26M1144,1414h16" />
      </g>
      <g fill="none" stroke="#555" stroke-width="4" stroke-dasharray="18 9">
        <path d="M45,895L128,860M45,895Q75,955 160,940M128,860L160,940" />
        <path d="M780,1335L775,1375M910,1375L945,1390 1070,1405" />
      </g>
      <path d="M778,1335L830,1325 835,1312 900,1312 903,1375" fill="none" stroke="#c8a450" stroke-width="4" stroke-dasharray="14 6" />
    `;
  }

  labels() {
    return svg`
      <text class="label" font-size="62" x="80" y="24">十</text>
      <text class="label" font-size="62" x="868" y="30">大</text>
      <text class="label" font-size="62" x="84" y="266">四</text>
      <text class="label" font-size="62" x="104 178 250 326 394" y="687">十津（五）</text>
      <text class="label" font-size="60" x="148 209 280 357 426" y="874">十津（六）</text>
      <text class="label" font-size="60" x="260 333 408" y="1556">仁井田</text>
      <text class="area" font-size="54" x="6 6" y="1546 1613">中島</text>
      <text class="area" font-size="54" x="438 438" y="1755 1819">小池</text>
      <text class="area" font-size="58" x="757 757" y="1628 1692">東町</text>
      <text class="label" font-size="86" x="0 98 194" y="0" transform="translate(890 1001) skewX(-18)">大平山</text>
      <text class="mark" font-size="46" x="612" y="1654">卍</text>
      <circle cx="564" cy="340" r="4.500" />
      <text class="number" font-size="46" x="580" y="352" textLength="60" lengthAdjust="spacingAndGlyphs">88</text>
      <text class="number" font-size="44" x="1040" y="1060" textLength="92" lengthAdjust="spacingAndGlyphs">155</text>
      <text class="number" font-size="44" x="1265" y="1110" textLength="88" lengthAdjust="spacingAndGlyphs">142</text>
      <text class="number" font-size="44" x="4" y="1115">8</text>
      <text class="number height" font-size="54" transform="translate(452 894) rotate(27)">50</text>
    `;
  }

  pins() {
    const peak = (x: number, y: number) => svg`
      <circle cx=${x} cy=${y} r="23" fill="#0d9a5c" stroke="#111" stroke-width="5" />
      <path d="M${x - 14},${y + 11}l8,-23l9,23zM${x + 5},${y + 11}l-4,-10l4,-8l9,18z" fill="#fff" />
    `;
    return svg`
      <circle cx="117" cy="838" r="22" fill="#0d9a5c" stroke="#111" stroke-width="4" />
      <path d="M106,846l6,-15l6,15M118,846l6,-15" stroke="#fff" stroke-width="3" fill="none" />
      ${peak(750, 1052)}${peak(1017, 1057)}
      <circle cx="1229" cy="1089" r="22" fill="#e8faf0" stroke="#0d9a5c" stroke-width="4" />
      <path d="M1229,1074l15,25h-30z" fill="none" stroke="#0d9a5c" stroke-width="4" stroke-linejoin="round" /><circle cx="1229" cy="1091" r="3" fill="#0d9a5c" />
      <circle cx="1248" cy="1109" r="3" />
      <g stroke="#fff" stroke-width="2"><circle cx="131" cy="781" r="25" fill="#2068d0" /><circle cx="85" cy="842" r="26" fill="#2068d0" /></g>
      <text class="badge" font-size="36" x="131" y="789">S</text>
      <circle cx="132" cy="812" r="25" fill="#cf0a26" stroke="#fff" stroke-width="3" />
      <text class="badge" font-size="38" x="131" y="826">G</text>
      <text class="badge" font-size="36" x="86" y="855">P</text>
    `;
  }

  render() {
    return html`
      <svg class="map" viewBox="6 3 1341 1908" preserveAspectRatio="none">
        <defs>
          ${angles.map(a => svg`
            <pattern id="estate${a}" width="56" height="37" patternUnits="userSpaceOnUse" patternTransform="rotate(${a})">
              <g fill="#ffc4a2" stroke="#ff8352" stroke-width="3.400">
                <rect x="2" y="3" width="11" height="12" /><rect x="17" y="2" width="14" height="12" /><rect x="35" y="4" width="8" height="11" /><rect x="46" y="3" width="7" height="11" />
                <rect x="3" y="21" width="13" height="11" /><rect x="20" y="20" width="9" height="13" /><rect x="33" y="21" width="14" height="10" />
              </g>
            </pattern>
          `)}
          <pattern id="village" width="180" height="180" patternUnits="userSpaceOnUse" patternTransform="rotate(-27)">
            ${houses.filter(h => h.on).map(h => svg`<rect x=${r1(h.x)} y=${r1(h.y)} width=${r1(h.w)} height=${r1(h.h)} transform="rotate(${r1(h.r)} ${r1(h.x)} ${r1(h.y)})" fill="#ffc09c" stroke="#ff8150" stroke-width="3.400" />`)}
          </pattern>
        </defs>
        <rect width="1400" height="1950" fill="#fff" />
        ${this.terrain()}
        <path d="M0,187H1350M0,827H1350M0,1469H1350M304,0V1920M944,0V1920" stroke="#e6e6e6" stroke-width="2" />
        ${this.buildings()} ${this.roads()} ${this.water()}
        <path d=${line('1062,0 1060,100 1050,165 1055,190 1100,290')} fill="none" stroke="#6c6c6c" stroke-width="21" />
        <path d=${line('1062,-5 1060,100 1050,165 1055,190 1103,296')} fill="none" stroke="#fff" stroke-width="14" />
        ${this.highways()} ${this.symbols()} ${this.labels()}
        ${route.map(([c, w, p]) => svg`<path d=${line(p)} fill="none" stroke=${c} stroke-width=${w} stroke-linejoin="round" />`)}
        ${this.pins()}
      </svg>
      <div class="controls">
        <div class="button wide">ルート詳細</div>
        <div class="button active">${icon('pace', 16)}</div>
        <div class="button">${icon('camera', 18)}</div>
        <div class="button zoom">${icon('plus', 15)}</div>
        <div class="button">${icon('minus', 15)}</div>
      </div>
      <div class="scale">100 m</div>
    `;
  }
}

@customElement('pace-chart')
export class PaceChart extends LitElement {
  static styles = css`
    :host {
      display: block;
    }
    svg {
      display: block;
    }
    text {
      font: 13.500px 'Liberation Sans', sans-serif;
      fill: #757575;
    }
  `;

  // drawn at 3 units per pixel
  render() {
    const hill = '138,645 165,620 185,550 215,535 240,475 265,448 290,442 345,390 395,360 415,325 435,312 442,298 458,302 480,240 488,240 505,260 540,264 565,237 590,208 608,200 620,208 635,228 670,233 750,236 765,230 785,204 795,212 812,235 835,248 850,262 885,267 905,260 912,246 925,250 945,322 960,326 980,342 1000,375 1045,388 1100,437 1120,450 1133,468 1147,470 1165,505 1185,541 1208,548 1230,615 1259,643';
    const pace = '188,284 242,338 295,347 350,349 405,345 455,351 508,380 560,384 610,392 665,392 708,420 760,425 815,422 870,431 935,435 1035,418 1090,418 1140,409 1190,403 1242,370';
    return html`
      <svg width="470" height="255" viewBox="0 0 470 255">
        <defs>
          <linearGradient id="hill" x1="0" y1="0" x2="0" y2="1"><stop offset="0" stop-color="#000" stop-opacity=".17" /><stop offset="1" stop-color="#000" stop-opacity=".09" /></linearGradient>
          <linearGradient id="pace" gradientUnits="userSpaceOnUse" x1="188" y1="0" x2="1242" y2="0">
            <stop offset="0" stop-color="#d0021b" /><stop offset=".06" stop-color="#e0501c" /><stop offset=".25" stop-color="#dd6a14" /><stop offset=".31" stop-color="#d09a18" /><stop offset=".45" stop-color="#ceb020" />
            <stop offset=".51" stop-color="#a4b458" /><stop offset=".7" stop-color="#7cb07c" /><stop offset=".8" stop-color="#a8bc50" /><stop offset=".93" stop-color="#d4c030" /><stop offset="1" stop-color="#e4a818" />
          </linearGradient>
        </defs>
        <g transform="scale(.33333)" fill="none">
          <path d="M138,58H1260M138,209H1260M138,359H1260M138,511H1260M138,662H1260M139,57V662M363,57V662M587,57V662M811,57V662M1036,57V662M1259,57V662" stroke="#e4e4e4" stroke-width="3" />
          <path d=${curve(parse(hill)) + 'L1259,662L138,662z'} fill="url(#hill)" />
          <path d=${line(pace)} stroke="url(#pace)" stroke-width="7" stroke-linejoin="round" />
        </g>
        <g text-anchor="end"><text x="36" y="22">200</text><text x="36" y="73">150</text><text x="36" y="124">100</text><text x="36" y="174">50</text><text x="36" y="225">m</text></g>
        <text x="430" y="22">300</text><text x="430" y="90">200</text><text x="430" y="157.500">100</text><text x="430" y="225">%</text>
        <g text-anchor="middle"><text x="46" y="243">km</text><text x="121" y="243">0.4</text><text x="195.500" y="243">0.8</text><text x="270.500" y="243">1.2</text><text x="345" y="243">1.6</text><text x="419.500" y="243">2.0</text></g>
      </svg>
    `;
  }
}

@customElement('app-root')
export class AppRoot extends LitElement {
  static styles = css`
    :host {
      display: block;
      height: 828px;
      box-sizing: border-box;
      padding: 16px 58px 0 22px;
      overflow: hidden;
      position: relative;
      background: #fff;
      color: #000;
      font-family: 'Liberation Sans', 'Noto Sans CJK JP', sans-serif;
    }
    h1 {
      margin: 0;
      height: 42px;
      font-size: 33.200px;
      line-height: 45px;
      font-weight: 700;
    }
    .icon {
      display: block;
      flex: none;
    }
    .stats {
      display: grid;
      grid-template-columns: repeat(5, 1fr);
      height: 118px;
      padding-top: 26px;
      box-sizing: border-box;
    }
    .stat-name {
      display: flex;
      align-items: center;
      justify-content: center;
      gap: 8px;
      height: 20px;
      padding-right: 5px;
      font-size: 15px;
      line-height: 18px;
      font-weight: 300;
      color: #757575;
    }
    .stats > div:last-child .stat-name {
      padding-right: 0;
    }
    .stat-name .dark {
      color: #000;
    }
    .stat-value {
      text-align: center;
      font-size: 33px;
      line-height: 38px;
      margin-top: 10px;
      font-weight: 700;
    }
    .unit {
      font-size: 20px;
      font-weight: 400;
    }
    .columns {
      display: grid;
      grid-template-columns: 447px 447px;
      gap: 53px;
    }
    .summary {
      height: 115px;
      box-sizing: border-box;
      padding: 0 10px;
      border-radius: 14px;
      background: #efefef;
    }
    .row {
      display: flex;
      align-items: center;
      height: 56px;
      box-sizing: border-box;
      padding: 4px 0 0 1px;
    }
    .row + .row {
      border-top: 1px solid #d5d5d5;
      padding: 0 4px 1px 5px;
    }
    .row + .row .title,
    .row + .row .icon {
      margin-top: -3px;
    }
    .row + .row .rating {
      margin-top: 4px;
    }
    .row + .row .rating b {
      margin-top: 1px;
    }
    .title {
      display: flex;
      align-items: center;
      gap: 4px;
      font-size: 13.300px;
      line-height: 19px;
      font-weight: 700;
    }
    .row .text {
      flex: 1;
      margin-left: 4px;
    }
    .row .text.title {
      margin-left: 5px;
    }
    .sub {
      font-size: 11.800px;
      line-height: 19px;
      color: #757575;
    }
    .rating {
      text-align: right;
      font-size: 10px;
      line-height: 14px;
      font-weight: 700;
      color: #757575;
    }
    .rating b {
      display: block;
      font-size: 20px;
      line-height: 24px;
      margin-top: 3px;
      color: #000;
    }
    .rating small {
      font-size: 12px;
      margin-left: 3px;
    }
    .tabs {
      display: grid;
      grid-template-columns: repeat(3, 150px);
      width: 450px;
      margin: 24px 0 22px 21px;
    }
    .tab {
      justify-self: center;
      height: 33px;
      padding: 0 33px;
      border-radius: 17px;
      font-size: 16.700px;
      line-height: 31px;
    }
    .tab.active {
      background: #000;
      color: #fff;
    }
    .chart {
      margin-left: -7px;
      height: 274px;
    }
    .detail {
      display: flex;
      align-items: center;
      height: 55px;
      box-sizing: border-box;
      padding: 0 7px 0 8px;
      border-bottom: 1px solid #d5d5d5;
      font-size: 13.200px;
      font-weight: 700;
    }
    .detail.first {
      height: 52px;
      padding: 3px 11px 0 8px;
    }
    .detail.last {
      height: 61px;
      padding-bottom: 2px;
    }
    .detail-name {
      flex: 1;
      margin-left: 8px;
      line-height: 20px;
    }
    .detail a {
      color: #30607f;
      font-size: 13px;
    }
    .chip {
      padding: 0 12px;
      border-radius: 13px;
      background: #efefef;
      font-size: 12px;
      line-height: 26px;
    }
    .export {
      padding: 0 13px;
      border-radius: 17px;
      background: #000;
      color: #fff;
      font-size: 13.400px;
      line-height: 33px;
    }
    /* floats over the map and the chart */
    .toolbar {
      position: absolute;
      left: 356px;
      top: 324px;
      width: 279px;
      height: 54px;
      box-sizing: border-box;
      padding: 0 10px 0 18px;
      display: flex;
      align-items: center;
      border-radius: 27px;
      background: #fff;
      box-shadow: 0 1px 7px rgba(0, 0, 0, 0.35);
      font-size: 12px;
    }
    .count {
      width: 20px;
      margin: -3px 15px 0 15px;
      white-space: nowrap;
    }
    .count.near {
      margin: -3px 16px 0 8px;
    }
    .toolbar .code {
      margin: 0 15px 0 20px;
    }
    .share {
      width: 39px;
      height: 39px;
      display: flex;
      align-items: center;
      justify-content: center;
      border-radius: 50%;
      background: #efefef;
    }
  `;

  @property({ attribute: false })
  stats = [
    { icon: 'time', name: 'タイム', value: '00:51', unit: '' },
    { icon: 'walk', name: '距離', value: '2.1', unit: 'km' },
    { icon: 'up', name: 'のぼり', value: '169', unit: 'm' },
    { icon: 'down', name: 'くだり', value: '170', unit: 'm' },
    { icon: 'fire', name: 'カロリー', value: '306', unit: 'kcal', help: true },
  ];

  render() {
    return html`
      <h1>活動データ</h1>
      <section class="stats">
        ${this.stats.map(
          s => html`
            <div>
              <div class="stat-name">
                ${icon(s.icon, 17)}<span>${s.name}</span>${s.help ? icon('help', 18, 'dark') : ''}
              </div>
              <div class="stat-value">${s.value}<span class="unit">${s.unit}</span></div>
            </div>
          `
        )}
      </section>
      <section class="columns">
        <trail-map></trail-map>
        <div>
          <div class="summary">
            <div class="row">
              ${icon('hiker', 18)}
              <div class="text">
                <div class="title">コース定数${icon('helpSolid', 12)}</div>
                <div class="sub">標準タイム 01:07 で算出</div>
              </div>
              <div class="rating">やさしい<b>4</b></div>
            </div>
            <div class="row">
              ${icon('pace', 17)}
              <div class="text title">平均ペース</div>
              <div class="rating">速い<b>130~150<small>%</small></b></div>
            </div>
          </div>
          <div class="tabs">
            <div class="tab active">距離</div>
            <div class="tab">行動時間</div>
            <div class="tab">日時</div>
          </div>
          <pace-chart class="chart"></pace-chart>
          <div class="detail first">
            ${icon('mountain', 17)}<span class="detail-name">山の情報</span><a>大平山（高知県高知市）</a>
          </div>
          <div class="detail">${icon('tag', 17)}<span class="detail-name">タグ</span><span class="chip">登山・山登り</span></div>
          <div class="detail last">
            ${icon('gpx', 17)}<span class="detail-name">GPXデータ</span><span class="export">エクスポート</span>
          </div>
        </div>
      </section>
      <div class="toolbar">
        ${icon('smile', 21)}<span class="count">0件</span>${icon('comment', 21)}<span class="count near">0件</span>
        ${icon('bookmark', 20)}${icon('code', 20, 'code')}
        <div class="share">${icon('share', 18)}</div>
      </div>
    `;
  }
}
